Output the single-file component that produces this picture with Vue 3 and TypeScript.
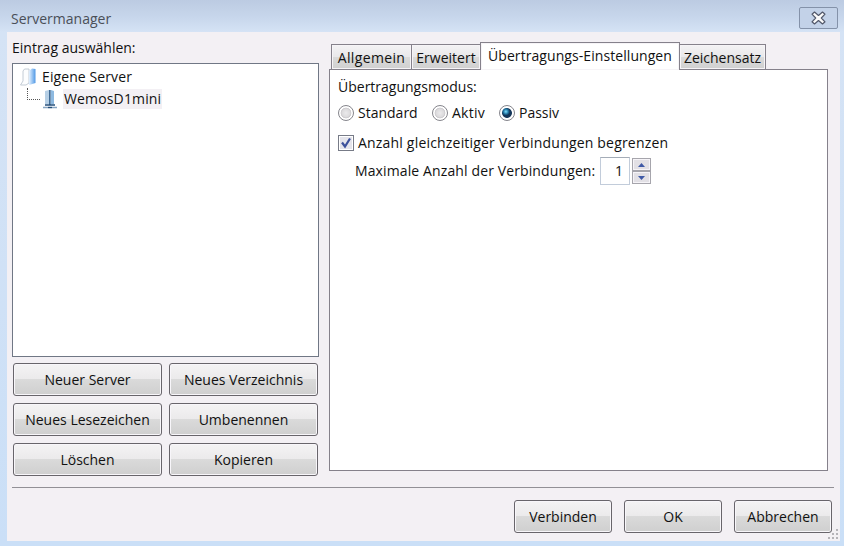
<script setup lang="ts">
import { ref } from 'vue'

interface Tab { id: string; label: string }

const tabs: Tab[] = [
  { id: 'general', label: 'Allgemein' },
  { id: 'advanced', label: 'Erweitert' },
  { id: 'transfer', label: 'Übertragungs-Einstellungen' },
  { id: 'charset', label: 'Zeichensatz' },
]
const activeTab = ref('transfer')
const modes: string[] = ['Standard', 'Aktiv', 'Passiv']
const mode = ref('Passiv')
const limited = ref(true)
const maxConnections = ref(1)
const entryActions: string[] = ['Neuer Server', 'Neues Verzeichnis', 'Neues Lesezeichen', 'Umbenennen', 'Löschen', 'Kopieren']
const dialogActions: string[] = ['Verbinden', 'OK', 'Abbrechen']
</script>

<template>
  <div class="window">
    <header class="titlebar">
      <span class="title">Servermanager</span>
      <button class="close" aria-label="Schließen">
        <svg width="15" height="14" viewBox="0 0 15 14">
          <path d="M3.500 1L7.500 4.500 11.500 1 14 3.200 10.300 7 14 10.800 11.500 13 7.500 9.500 3.500 13 1 10.800 4.700 7 1 3.200z" fill="#fafafa" stroke="#53596b" stroke-width="1.200" stroke-linejoin="round" />
        </svg>
      </button>
    </header>

    <main class="client">
      <div class="columns">
        <section class="left">
          <div class="caption">Eintrag auswählen:</div>
          <div class="tree">
            <div class="node">
              <svg width="18" height="20" viewBox="0 0 18 20">
                <defs>
                  <linearGradient id="folder" x1="0" x2="1">
                    <stop offset="0" stop-color="#e4f1ff" />
                    <stop offset="1" stop-color="#4f98e5" />
                  </linearGradient>
                </defs>
                <path d="M3 4l1.500-2H9v14l-3 2H.500L3 14z" fill="#fcfdfe" stroke="#b5bfcc" stroke-width=".8" />
                <path d="M9 4l3-2.500 3.500.5v14L9 18z" fill="url(#folder)" />
              </svg>
              <span class="root-label">Eigene Server</span>
            </div>
            <div class="node child">
              <span class="branch"></span>
              <svg width="16" height="20" viewBox="0 0 16 20">
                <path d="M3 2l4-1v14H3z" fill="#b6cfe5" />
                <path d="M9 1l3 1v13H9z" fill="#8db9e0" />
                <path d="M7 1h1.700v15H7z" fill="#416b94" />
                <path d="M1 18.500h5M10 18.500h5" stroke="#87a5c2" stroke-width="1.500" />
                <path d="M3 16h10M6 18.500h4" stroke="#234d79" stroke-width="1.600" />
              </svg>
              <span class="selected">WemosD1mini</span>
            </div>
          </div>
          <div class="entry-actions">
            <button v-for="a in entryActions" :key="a" class="button">{{ a }}</button>
          </div>
        </section>

        <section class="right">
          <nav class="tabs">
            <button v-for="t in tabs" :key="t.id" :class="['tab', t.id, { active: activeTab === t.id }]" @click="activeTab = t.id">{{ t.label }}</button>
          </nav>
          <div class="panel">
            <div class="mode-title">Übertragungsmodus:</div>
            <div class="modes">
              <div v-for="m in modes" :key="m" class="mode" @click="mode = m">
                <span :class="['radio', { on: mode === m }]"></span>
                <span :class="['mode-label', m.toLowerCase()]">{{ m }}</span>
              </div>
            </div>
            <div class="limit" @click="limited = !limited">
              <span class="check">
                <svg v-if="limited" width="12" height="12" viewBox="0 0 12 12"><path d="M2 5.500l3 4L10 1.500" fill="none" stroke="#3c519b" stroke-width="2.200" /></svg>
              </span>
              <span class="limit-label">Anzahl gleichzeitiger Verbindungen begrenzen</span>
            </div>
            <div class="maximum">
              <span class="maximum-label">Maximale Anzahl der Verbindungen:</span>
              <span class="number">{{ maxConnections }}</span>
              <span class="spinner">
                <button class="spin" aria-label="Mehr" @click="maxConnections++"><svg width="7" height="4" viewBox="0 0 7 4"><path d="M0 4l3.500-4L7 4z" fill="#3f59a6" /></svg></button>
                <button class="spin" aria-label="Weniger" @click="maxConnections--"><svg width="7" height="4" viewBox="0 0 7 4"><path d="M0 0l3.500 4L7 0z" fill="#3f59a6" /></svg></button>
              </span>
            </div>
          </div>
        </section>
      </div>

      <footer class="footer">
        <button v-for="a in dialogActions" :key="a" class="button">{{ a }}</button>
      </footer>
      <svg class="grip" width="12" height="12" viewBox="0 0 12 12">
        <path d="M9 1h2v2H9zM5 5h2v2H5zM9 5h2v2H9zM1 9h2v2H1zM5 9h2v2H5zM9 9h2v2H9z" fill="#b5b3b8" />
      </svg>
    </main>
  </div>
</template>

<style>
body { overflow: hidden; }
</style>

<style scoped>
* { box-sizing: border-box; }
.window {
  width: 844px; height: 546px; padding: 0 4px 5px 7px;
  display: flex; flex-direction: column;
  background: linear-gradient(#bccbe2 0, #c8d7ec 18px, #d5e3f5 32px, #cadff7 100%);
  font: 14px/20px "Open Sans", "Noto Sans", sans-serif; color: #111;
  white-space: nowrap;
}
button { font: inherit; color: inherit; margin: 0; padding: 0; white-space: nowrap; }
.titlebar { height: 32px; flex: none; display: flex; justify-content: space-between; align-items: flex-start; padding: 7px 2px 0 4px; }
.title { line-height: 24px; color: #4a4f58; }
.close {
  width: 39px; height: 22px; display: flex; align-items: center; justify-content: center;
  border: 1px solid #8492a9; border-radius: 2px; background: #c3d2e8;
}
.client { flex: 1; position: relative; background: #f3f0f4; padding: 6px 6px 0 5px; }
.columns { display: flex; gap: 10px; }
.left { width: 307px; }
.caption { height: 25px; }
.tree { height: 294px; background: #fff; border: 1px solid #707785; padding: 2px 0 0 7px; }
.node { height: 22px; display: flex; align-items: center; }
.node svg { flex: none; }
.root-label { margin-left: 4px; letter-spacing: .1px; }
.child { padding-left: 7px; }
.branch { width: 13px; height: 12px; align-self: flex-start; border-left: 1px dotted #555; border-bottom: 1px dotted #555; margin-right: 2px; }
.selected { margin-left: 5px; padding: 0 1px; background: #f3f0f4; letter-spacing: .15px; }
.entry-actions { display: grid; grid-template-columns: 149px 149px; grid-auto-rows: 33px; gap: 7px; padding: 6px 0 0 1px; }
.button {
  height: 33px; border: 1px solid #68656b; border-radius: 3px;
  background: linear-gradient(#f4f3f4 0, #ebeaeb 49%, #dadada 50%, #cfcfcf 100%);
  box-shadow: inset 0 0 0 1px #f8f6fa; text-align: center;
}
.right { width: 499px; padding-top: 4px; }
.tabs { display: flex; align-items: flex-end; height: 27px; padding-left: 2px; }
.tab {
  height: 25px; border: 1px solid #85818b; border-bottom: 0;
  background: linear-gradient(#f3f2f4 0, #e9e8ea 50%, #dadada 51%, #d0d0d0 100%);
  box-shadow: inset 0 0 0 1px #f6f4f7; padding-top: 2px;
}
.general { width: 81px; margin-right: -1px; letter-spacing: .35px; }
.advanced { width: 70px; }
.charset { width: 87px; margin-left: -1px; }
.transfer { width: 200px; margin-left: -1px; letter-spacing: .07px; }
.tab.active { height: 28px; margin-bottom: -1px; background: #fff; position: relative; padding: 0 0 2px; }
.panel { height: 402px; background: #fff; border: 1px solid #85818b; padding: 7px 8px 0; }
.modes { display: flex; padding-top: 5px; }
.mode { display: flex; align-items: center; gap: 4px; height: 22px; }
.mode-label { display: block; }
.mode-label.standard { width: 74px; }
.mode-label.aktiv { width: 47px; letter-spacing: .25px; }
.radio { width: 16px; height: 16px; border: 1px solid #85858c; border-radius: 50%; background: radial-gradient(circle at 50% 50%, #ebeaec 0, #dcdbdd 4px, #cbc9cd 5px, #fff 5.700px); }
.radio.on { background: radial-gradient(circle at 42% 40%, #7de0ff 0, #21739f 2.500px, transparent 4px), radial-gradient(circle, #102f52 0, #17385b 4.500px, #fff 5.300px); }
.limit { height: 30px; margin-top: 4px; display: flex; align-items: center; gap: 4px; }
.limit-label { letter-spacing: .19px; }
.check { width: 16px; height: 16px; border: 1px solid #777b87; background: #e4e4eb; box-shadow: inset 0 0 0 1px #fff; display: flex; align-items: center; justify-content: center; }
.maximum { height: 28px; margin-top: -1px; padding-left: 17px; display: flex; align-items: center; }
.maximum-label { width: 245px; letter-spacing: .12px; }
.number { width: 30px; height: 28px; border: 1px solid #c2ccda; border-top-color: #a4acb7; text-align: right; padding: 3px 6px 0 0; }
.spinner { width: 19px; height: 26px; margin-left: 2px; display: grid; grid-template-rows: 13px 13px; }
.spin { border: 1px solid #a6a5ac; background: #e2e0e5; box-shadow: inset 0 0 0 1px #f6f4f8; display: flex; align-items: center; justify-content: center; }
.footer { width: 822px; margin-top: 11px; padding: 12px 2px 0 0; border-top: 1px solid #929096; display: flex; justify-content: flex-end; gap: 12px; }
.footer .button { width: 98px; }
.grip { position: absolute; right: 1px; bottom: 1px; }
</style>
